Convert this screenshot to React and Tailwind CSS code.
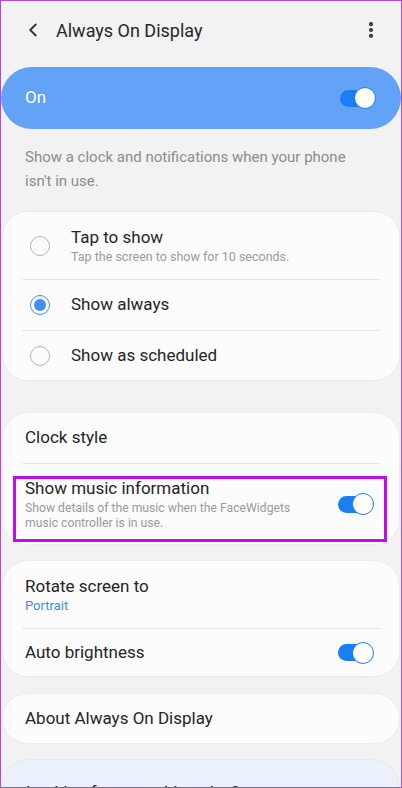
import { ChevronLeft, EllipsisVertical } from 'lucide-react';

function Toggle() {
  return (
    <div className="relative w-[36px] h-[22px] flex items-center shrink-0">
      <div className="w-[34px] h-[17px] rounded-full bg-[#1a7ff2]" />
      <div className="absolute right-0 top-0 w-[22px] h-[22px] rounded-full bg-white border-[1.5px] border-[#1a7ff2]" />
    </div>
  );
}

function Radio({ checked }) {
  return (
    <div
      className={
        checked
          ? 'w-[20px] h-[20px] rounded-full border-[1.5px] border-[#3f8ff5] flex items-center justify-center shrink-0'
          : 'w-[20px] h-[20px] rounded-full border-[1.5px] border-[#b5b5b5] shrink-0'
      }
    >
      {checked && <div className="w-[12px] h-[12px] rounded-full bg-[#3f8ff5]" />}
    </div>
  );
}

const Divider = () => <div className="mx-[19px] h-px bg-[#e6e6e6]" />;

export default function App() {
  return (
    <div
      className="w-[402px] h-[788px] overflow-hidden bg-[#f2f2f2] border border-[#b347d9] text-[#252525]"
      style={{ fontFamily: 'Roboto, "Noto Sans", sans-serif' }}
    >
      {/* Header */}
      <div className="h-[58px] flex items-center pl-[21px] pr-[20px]">
        <ChevronLeft className="w-[22px] h-[22px] text-[#333]" strokeWidth={2} />
        <div className="ml-[12px] text-[18px] text-[#262626] flex-1">Always On Display</div>
        <EllipsisVertical className="w-[20px] h-[20px] text-[#333]" strokeWidth={3} />
      </div>

      {/* Master switch */}
      <div className="mt-[8px] h-[62px] rounded-full bg-[#62a2f7] flex items-center pl-[24px] pr-[25px]">
        <div className="flex-1 text-white text-[17px]">On</div>
        <Toggle />
      </div>

      <p className="pl-[24px] pr-[44px] pt-[16px] pb-[18px] text-[15px] leading-[24px] text-[#8c8c8c]">
        Show a clock and notifications when your phone isn't in use.
      </p>

      {/* Mode card */}
      <div className="mx-px rounded-[26px] bg-[#fcfcfc] border border-[#ececec]">
        <div className="h-[67px] flex items-center pl-[27px]">
          <Radio />
          <div className="ml-[21px]">
            <div className="text-[17px] leading-[22px]">Tap to show</div>
            <div className="text-[12.5px] leading-[17px] text-[#9a9a9a]">Tap the screen to show for 10 seconds.</div>
          </div>
        </div>
        <Divider />
        <div className="h-[50px] flex items-center pl-[27px]">
          <Radio checked />
          <div className="ml-[21px] text-[17px]">Show always</div>
        </div>
        <Divider />
        <div className="h-[49px] flex items-center pl-[27px]">
          <Radio />
          <div className="ml-[21px] text-[17px]">Show as scheduled</div>
        </div>
      </div>

      {/* Clock / music card */}
      <div className="mt-[31px] mx-px rounded-[26px] bg-[#fcfcfc] border border-[#ececec]">
        <div className="h-[50px] flex items-center pl-[22px] text-[17px]">Clock style</div>
        <Divider />
        <div className="relative h-[80px] flex items-center pl-[22px] pr-[25px]">
          <div className="flex-1 pr-[20px]">
            <div className="text-[17px] leading-[22px]">Show music information</div>
            <div className="mt-[2px] text-[12.2px] leading-[15px] text-[#9a9a9a]">
              Show details of the music when the FaceWidgets music controller is in use.
            </div>
          </div>
          <Toggle />
          <div className="absolute left-[10px] right-[12px] top-[12px] bottom-[2px] border-[3px] border-[#c30df0]" />
        </div>
      </div>

      {/* Rotate / brightness card */}
      <div className="mt-[15px] mx-px rounded-[26px] bg-[#fcfcfc] border border-[#ececec]">
        <div className="h-[67px] flex flex-col justify-center pl-[22px]">
          <div className="text-[17px] leading-[22px]">Rotate screen to</div>
          <div className="text-[13px] leading-[18px] text-[#3d8ee8]">Portrait</div>
        </div>
        <Divider />
        <div className="h-[47px] flex items-center pl-[22px] pr-[25px]">
          <div className="flex-1 text-[17px]">Auto brightness</div>
          <Toggle />
        </div>
      </div>

      {/* About */}
      <div className="mt-[16px] mx-px h-[51px] rounded-[26px] bg-[#fcfcfc] border border-[#ececec] flex items-center pl-[22px] text-[17px]">
        About Always On Display
      </div>

      {/* Looking for something else */}
      <div className="mt-[15px] mx-[2px] h-[80px] rounded-[26px] bg-[#eaf1fa] border border-[#e6e9ee] pl-[22px] pt-[20px] text-[17px]">
        Looking for something else?
      </div>
    </div>
  );
}
